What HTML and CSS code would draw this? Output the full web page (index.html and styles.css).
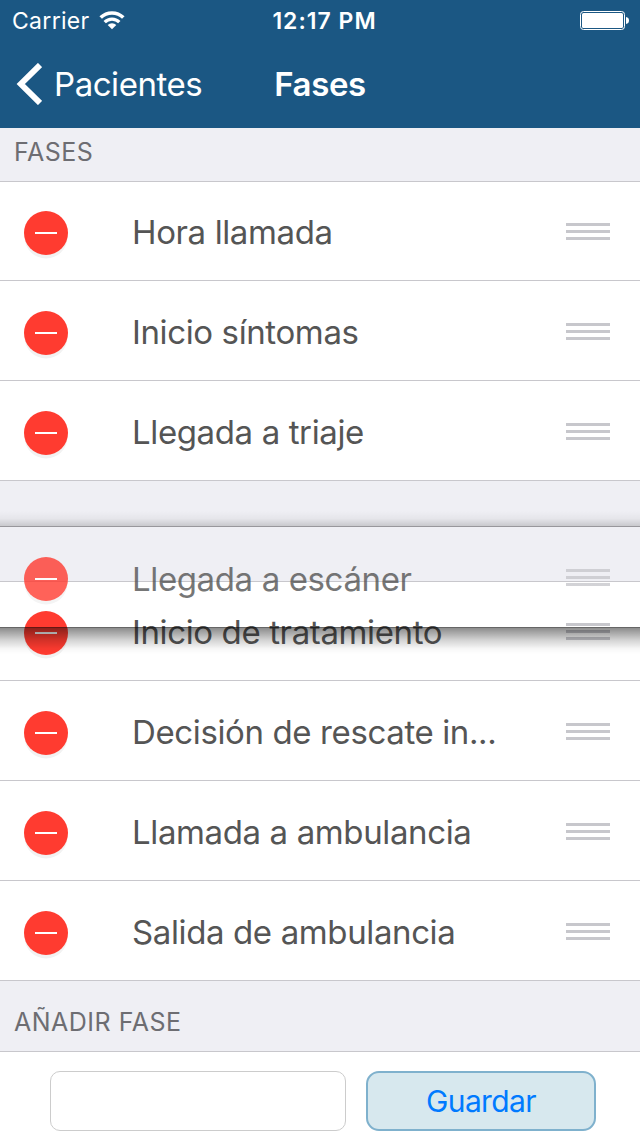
FILE: index.html
```html
<!DOCTYPE html>
<html lang="es">
<head>
    <meta charset="UTF-8">
    <meta name="viewport" content="width=device-width, initial-scale=1.0">
    <title>Fases</title>
    <link rel="stylesheet" href="styles.css">
</head>
<body>
    <header class="top-bar">
        <div class="status-bar">
            <div class="carrier">
                <span>Carrier</span>
                <svg class="wifi" width="26" height="20" viewBox="0 0 26 20">
                    <path d="M1.700 7.600a16 16 0 0 1 22.600 0" fill="none" stroke="#fff" stroke-width="3.600"/>
                    <path d="M5.700 12.200a10.300 10.300 0 0 1 14.600 0" fill="none" stroke="#fff" stroke-width="3.300"/>
                    <path d="M8.700 15a5.900 5.900 0 0 1 8.600 0L13 19.300z" fill="#fff"/>
                </svg>
            </div>
            <span class="time">12:17 PM</span>
            <svg class="battery" width="49" height="19" viewBox="0 0 49 19">
                <rect x="0.5" y="0.5" width="44" height="18" rx="3" fill="none" stroke="#fff"/>
                <rect x="2" y="2" width="41" height="15" rx="1.5" fill="#fff"/>
                <path d="M46 6c2 .3 3 1.500 3 3.500s-1 3.200-3 3.500z" fill="#fff"/>
            </svg>
        </div>
        <nav class="nav-bar">
            <a class="back">
                <svg width="26" height="42" viewBox="0 0 26 42">
                    <path d="M24 2L4.800 21L24 40" fill="none" stroke="#fff" stroke-width="5.900"/>
                </svg>
                <span>Pacientes</span>
            </a>
            <h1>Fases</h1>
        </nav>
    </header>

    <main>
        <h2 class="section-title first"><span>FASES</span></h2>
        <ul class="phase-list">
            <li class="phase"><button class="delete"></button><span class="name">Hora llamada</span><i class="handle"></i></li>
            <li class="phase"><button class="delete"></button><span class="name">Inicio síntomas</span><i class="handle"></i></li>
            <li class="phase"><button class="delete"></button><span class="name">Llegada a triaje</span><i class="handle"></i></li>
        </ul>

        <!-- empty slot, the row being moved floats over it -->
        <div class="slot">
            <div class="phase dragging"><button class="delete"></button><span class="name">Llegada a escáner</span><i class="handle"></i></div>
        </div>

        <ul class="phase-list">
            <li class="phase"><button class="delete"></button><span class="name">Inicio de tratamiento</span><i class="handle"></i></li>
            <li class="phase"><button class="delete"></button><span class="name">Decisión de rescate in...</span><i class="handle"></i></li>
            <li class="phase"><button class="delete"></button><span class="name">Llamada a ambulancia</span><i class="handle"></i></li>
            <li class="phase"><button class="delete"></button><span class="name">Salida de ambulancia</span><i class="handle"></i></li>
        </ul>

        <h2 class="section-title add"><span>AÑADIR FASE</span></h2>
        <form class="add-form">
            <input type="text" class="phase-input">
            <button type="button" class="save">Guardar</button>
        </form>
    </main>
</body>
</html>
```
FILE: styles.css
```css
* {
    box-sizing: border-box;
}
body {
    margin: 0;
    width: 640px;
    height: 1136px;
    overflow: hidden;
    background-color: #efeff4;
    font-family: Inter, "Liberation Sans", sans-serif;
    color: #555;
}
h1, h2, ul {
    margin: 0;
    padding: 0;
    font-weight: normal;
}
button {
    padding: 0;
    font-family: inherit;
}
.top-bar {
    height: 128px;
    background-color: #1b5783;
    color: #fff;
}
.status-bar {
    display: grid;
    grid-template-columns: 1fr auto 1fr;
    align-items: center;
    height: 40px;
    padding: 0 11px 0 12px;
    font-size: 23px;
}
.carrier {
    display: flex;
    align-items: center;
    gap: 9px;
    letter-spacing: 0.3px;
}
.carrier span,
.time {
    padding-top: 2px;
}
.time {
    font-weight: 600;
    letter-spacing: 1px;
    padding-left: 8px;
}
.battery {
    justify-self: end;
}
.nav-bar {
    display: grid;
    grid-template-columns: 1fr auto 1fr;
    align-items: center;
    height: 88px;
    padding: 0 16px;
    font-size: 33px;
}
.back {
    display: flex;
    align-items: center;
    gap: 12px;
    letter-spacing: -0.45px;
}
.nav-bar h1 {
    font-size: 33px;
    font-weight: 600;
    letter-spacing: -0.4px;
}
.section-title {
    display: flex;
    align-items: center;
    padding-left: 14px;
    font-size: 25px;
    letter-spacing: 0.5px;
    color: #6d6d72;
}
.section-title.first {
    height: 53px;
    padding-bottom: 5px;
}
.section-title.add {
    height: 70px;
    padding-top: 12px;
}
.phase-list {
    list-style: none;
    background-color: #fff;
    box-shadow: inset 0 1px #c8c7cc;
}
.phase {
    display: flex;
    align-items: center;
    height: 100px;
    padding: 0 30px 0 24px;
    border-bottom: 1px solid #c8c7cc;
}
.delete {
    display: flex;
    align-items: center;
    justify-content: center;
    width: 44px;
    height: 44px;
    margin: 5px 64px 0 0;
    border: none;
    border-radius: 50%;
    background-color: #ff3b30;
    box-shadow: 0 4px 0 -0.5px #f2f2f2;
}
.delete::before {
    content: "";
    width: 22px;
    height: 2px;
    background-color: #fff;
}
.name {
    flex: 1;
    font-size: 33px;
    line-height: 40px;
    letter-spacing: -0.38px;
    padding-top: 2px;
    white-space: nowrap;
}
.handle {
    width: 44px;
    height: 17px;
    margin-top: 2px;
    background: repeating-linear-gradient(#c7c7cc 0 3px, transparent 3px 7px);
}
.slot {
    position: relative;
    z-index: 1;
    height: 100px;
}
.dragging {
    position: absolute;
    top: 46px;
    left: 0;
    width: 100%;
    border-bottom-color: transparent;
}
.dragging > * {
    opacity: 0.8;
}
.dragging .name {
    padding-top: 4px;
}
.dragging::before,
.dragging::after {
    content: "";
    position: absolute;
    left: 0;
    width: 100%;
}
.dragging::before {
    bottom: 100%;
    height: 15px;
    border-bottom: 1px solid #98979c;
    background: linear-gradient(transparent, rgba(0, 0, 0, 0.04) 50%, rgba(0, 0, 0, 0.16));
}
.dragging::after {
    top: calc(100% + 1px);
    height: 26px;
    border-top: 1px solid rgba(0, 0, 0, 0.6);
    background: linear-gradient(rgba(0, 0, 0, 0.45), rgba(0, 0, 0, 0.18) 45%, rgba(0, 0, 0, 0.03) 80%, transparent);
    background-clip: padding-box;
}
.add-form {
    display: flex;
    gap: 20px;
    height: 85px;
    padding: 20px 44px 5px 50px;
    background-color: #fff;
    box-shadow: inset 0 1px #c8c7cc;
}
.phase-input {
    width: 296px;
    border: 1px solid #ccc;
    border-radius: 10px;
    background-color: #fff;
}
.save {
    width: 230px;
    border: 2px solid #7fb1cd;
    border-radius: 13px;
    background-color: #d7e8ee;
    font-size: 30px;
    letter-spacing: -0.6px;
    color: #007aff;
}
```
